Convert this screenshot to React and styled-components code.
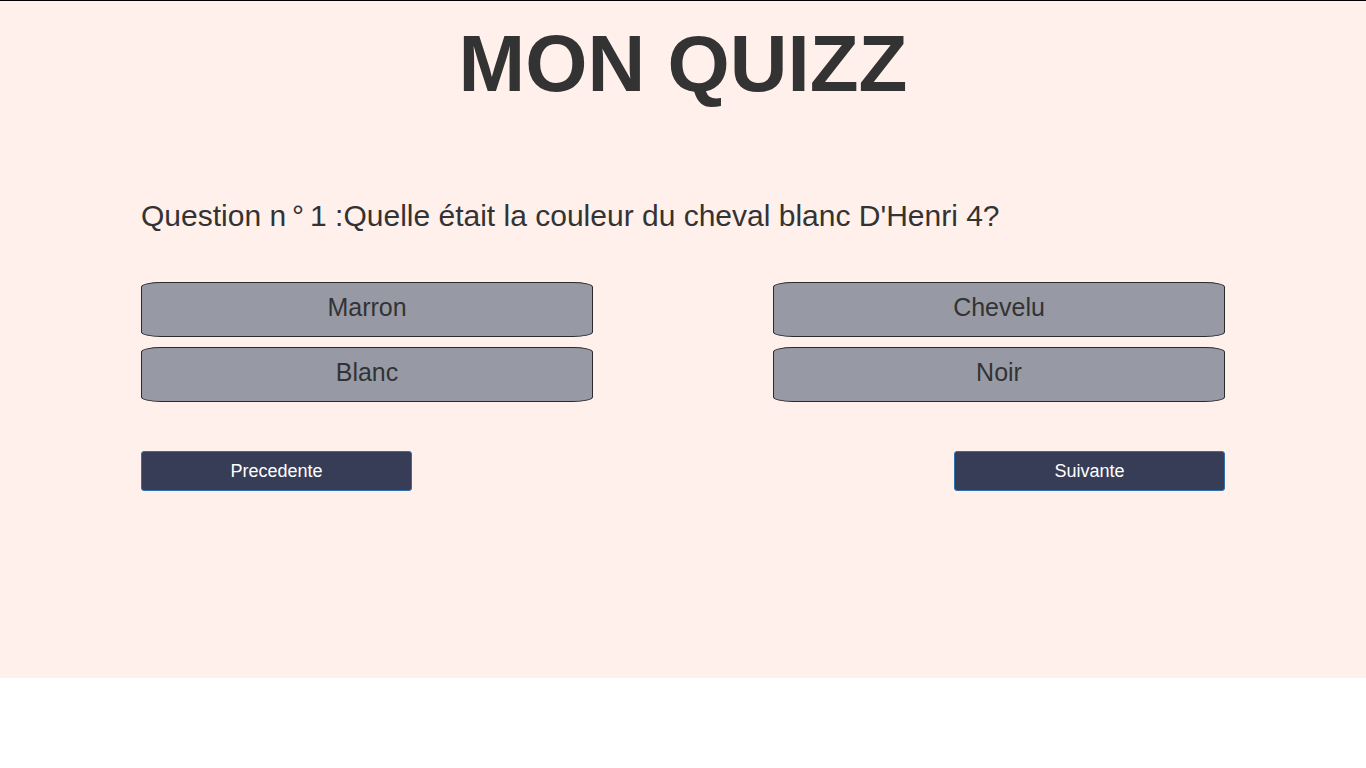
import React from "react";
import styled, { createGlobalStyle } from "styled-components";

const Global = createGlobalStyle`
  html, body { margin: 0; padding: 0; background: #ffffff; }
  body { font-family: "Liberation Sans", Arial, sans-serif; }
  * { box-sizing: border-box; }
`;

const Page = styled.main`
  background: #fff0ec;
  border-top: 1px solid #000;
  height: 678px;
  display: flex;
  flex-direction: column;
  align-items: center;
`;

const Title = styled.h1`
  margin: 17px 0 0;
  font-size: 80px;
  font-weight: 700;
  line-height: 92px;
  color: #333333;
  text-align: center;
`;

const Quiz = styled.section`
  width: 1084px;
  margin-top: 89px;
  display: flex;
  flex-direction: column;
`;

const Question = styled.h2`
  margin: 0;
  font-size: 30px;
  font-weight: 400;
  line-height: 34px;
  color: #333333;
`;

const Degree = styled.span`
  margin: 0 6px;
`;

const Answers = styled.div`
  margin-top: 49px;
  display: grid;
  grid-template-columns: 452px 452px;
  justify-content: space-between;
  row-gap: 10px;
`;

const Answer = styled.button`
  height: 55px;
  background: #979aa5;
  border: 1px solid #2b2b2b;
  border-radius: 20px / 5px;
  font-family: "Liberation Sans", Arial, sans-serif;
  font-size: 25px;
  color: #333333;
  cursor: pointer;
  padding: 0 0 4px;
`;

const Nav = styled.div`
  margin-top: 49px;
  display: flex;
  justify-content: space-between;
`;

const NavButton = styled.button`
  width: 271px;
  height: 40px;
  background: #373d57;
  border: 1px solid #2f6fae;
  border-radius: 3px;
  color: #ffffff;
  font-family: "Liberation Sans", Arial, sans-serif;
  font-size: 18px;
  cursor: pointer;
  padding: 0;
`;

const answers = ["Marron", "Chevelu", "Blanc", "Noir"];

export default function App() {
  return (
    <>
      <Global />
      <Page>
        <Title>MON QUIZZ</Title>
        <Quiz>
          <Question>
            Question n<Degree>°</Degree>1 :Quelle était la couleur du cheval blanc D'Henri 4?
          </Question>
          <Answers>
            {answers.map((a) => (
              <Answer key={a}>{a}</Answer>
            ))}
          </Answers>
          <Nav>
            <NavButton>Precedente</NavButton>
            <NavButton>Suivante</NavButton>
          </Nav>
        </Quiz>
      </Page>
    </>
  );
}
